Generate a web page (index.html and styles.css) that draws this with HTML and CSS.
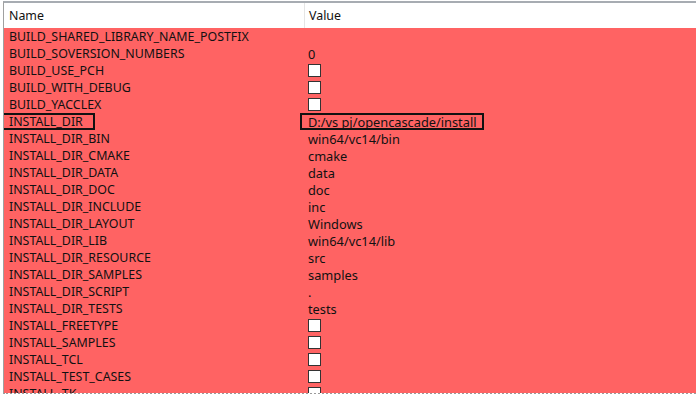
FILE: index.html
```html
<!DOCTYPE html>
<html lang="en">
<head>
    <meta charset="UTF-8">
    <title>CMake cache</title>
    <link rel="stylesheet" href="styles.css">
</head>
<body>

<div class="view">
    <div class="head">
        <div class="col-name">Name</div>
        <div class="col-value">Value</div>
    </div>
    <div class="rows" id="rows"></div>
    <div class="mark mark-name"></div>
    <div class="mark mark-value"></div>
</div>

<script>
    // entries: [name, value]; value true = checkbox
    const entries = [
        ["BUILD_SHARED_LIBRARY_NAME_POSTFIX", ""],
        ["BUILD_SOVERSION_NUMBERS", "0"],
        ["BUILD_USE_PCH", true],
        ["BUILD_WITH_DEBUG", true],
        ["BUILD_YACCLEX", true],
        ["INSTALL_DIR", "D:/vs pj/opencascade/install"],
        ["INSTALL_DIR_BIN", "win64/vc14/bin"],
        ["INSTALL_DIR_CMAKE", "cmake"],
        ["INSTALL_DIR_DATA", "data"],
        ["INSTALL_DIR_DOC", "doc"],
        ["INSTALL_DIR_INCLUDE", "inc"],
        ["INSTALL_DIR_LAYOUT", "Windows"],
        ["INSTALL_DIR_LIB", "win64/vc14/lib"],
        ["INSTALL_DIR_RESOURCE", "src"],
        ["INSTALL_DIR_SAMPLES", "samples"],
        ["INSTALL_DIR_SCRIPT", "."],
        ["INSTALL_DIR_TESTS", "tests"],
        ["INSTALL_FREETYPE", true],
        ["INSTALL_SAMPLES", true],
        ["INSTALL_TCL", true],
        ["INSTALL_TEST_CASES", true],
        ["INSTALL_TK", true]
    ];

    const rows = document.getElementById("rows");
    entries.forEach(([name, value]) => {
        const val = value === true ? '<span class="check"></span>' : value;
        rows.innerHTML += `<div class="row"><div class="col-name">${name}</div><div class="col-value">${val}</div></div>`;
    });
</script>
</body>
</html>
```
FILE: styles.css
```css
body {
    margin: 0;
    background-color: #fff;
    font-family: "Noto Sans", "Open Sans", sans-serif;
    font-size: 12.4px;
    color: #111;
    overflow: hidden;
}
.view {
    position: relative;
    margin: 1px 0 0 3px;
    height: 390px;
    border-top: 2px solid #a7acb2;
    border-left: 1px solid #a0a0a0;
    border-bottom: 2px dotted #9a9a9a;
    overflow: hidden;
}
.head {
    display: flex;
    height: 25px;
    align-items: center;
    background-color: #fff;
}
.head .col-value {
    border-left: 1px solid #e5e5e5;
    height: 25px;
    display: flex;
    align-items: center;
}
.col-name {
    width: 300px;
    padding-left: 5px;
    box-sizing: border-box;
    white-space: nowrap;
}
.col-value {
    padding-left: 4px;
    white-space: nowrap;
}
.rows {
    background-color: #ff6363;
}
.row {
    display: flex;
    height: 17px;
    align-items: center;
}
.row .col-value {
    font-size: 12.8px;
}
.check {
    display: block;
    width: 11px;
    height: 11px;
    background-color: #fff;
    border: 1px solid #333;
}

/* annotation boxes */
.mark {
    position: absolute;
    top: 110px;
    height: 13px;
    border: 2px solid #111;
}
.mark-name {
    left: -3px;
    width: 90px;
}
.mark-value {
    left: 296px;
    width: 180px;
}
```
